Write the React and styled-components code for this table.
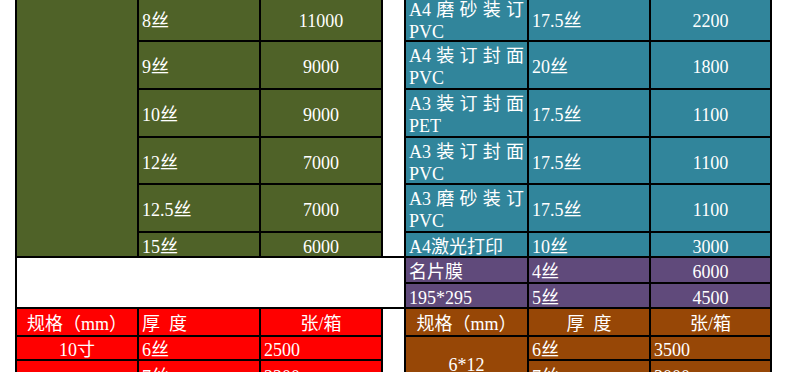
import React from "react";
import styled, { createGlobalStyle } from "styled-components";

const GlobalStyle = createGlobalStyle`
  html, body {
    margin: 0;
    padding: 0;
    background: #fff;
    overflow: hidden;
  }
  body {
    font-family: "Liberation Serif", "Noto Sans CJK SC", serif;
  }
`;

const tones = {
  green: "#4f6228",
  teal: "#31859b",
  purple: "#604a7b",
  red: "#ff0000",
  brown: "#974706",
  blank: "#ffffff",
};

// the sheet is a spreadsheet grid, black gaps act as cell borders
const Sheet = styled.div`
  display: grid;
  grid-template-columns: 120px 120px 120px 21px 121px 120px 119px;
  grid-template-rows: 43px 46px 46px 45px 46px 23px 24px 23px 26px 22px 28px;
  gap: 2px;
  padding: 0 2px 2px;
  margin: -3px 0 0 15px;
  width: max-content;
  background: #000;
`;

const Cell = styled.div`
  grid-row: ${(p) => p.$row} / span ${(p) => p.$rows || 1};
  grid-column: ${(p) => p.$col} / span ${(p) => p.$cols || 1};
  background: ${(p) => tones[p.$tone]};
  color: #fff;
  display: flex;
  align-items: center;
  justify-content: ${(p) => (p.$center ? "center" : "flex-start")};
  padding: 4px 3px 0;
  font-size: 18px;
  line-height: 22px;
  white-space: pre;
  overflow: hidden;
`;

const Label = styled.span`
  display: block;
  width: 100%;
  white-space: normal;
  text-align: justify;
`;

const green = [
  ["8丝", "11000"],
  ["9丝", "9000"],
  ["10丝", "9000"],
  ["12丝", "7000"],
  ["12.5丝", "7000"],
  ["15丝", "6000"],
];

const teal = [
  ["A4磨砂装订PVC", "17.5丝", "2200"],
  ["A4装订封面PVC", "20丝", "1800"],
  ["A3装订封面PET", "17.5丝", "1100"],
  ["A3装订封面PVC", "17.5丝", "1100"],
  ["A3磨砂装订PVC", "17.5丝", "1100"],
  ["A4激光打印", "10丝", "3000"],
];

const purple = [
  ["名片膜", "4丝", "6000"],
  ["195*295", "5丝", "4500"],
];

export default function App() {
  return (
    <>
      <GlobalStyle />
      <Sheet>
        {/* left block */}
        <Cell $tone="green" $row={1} $rows={6} $col={1} />
        {green.map(([thick, qty], i) => (
          <React.Fragment key={"g" + i}>
            <Cell $tone="green" $row={i + 1} $col={2}>{thick}</Cell>
            <Cell $tone="green" $row={i + 1} $col={3} $center>{qty}</Cell>
          </React.Fragment>
        ))}
        <Cell $tone="blank" $row={1} $rows={6} $col={4} />

        {/* right block */}
        {teal.map(([name, thick, qty], i) => (
          <React.Fragment key={"t" + i}>
            <Cell $tone="teal" $row={i + 1} $col={5}>
              <Label>{name}</Label>
            </Cell>
            <Cell $tone="teal" $row={i + 1} $col={6}>{thick}</Cell>
            <Cell $tone="teal" $row={i + 1} $col={7} $center>{qty}</Cell>
          </React.Fragment>
        ))}
        {purple.map(([name, thick, qty], i) => (
          <React.Fragment key={"p" + i}>
            <Cell $tone="purple" $row={i + 7} $col={5}>{name}</Cell>
            <Cell $tone="purple" $row={i + 7} $col={6}>{thick}</Cell>
            <Cell $tone="purple" $row={i + 7} $col={7} $center>{qty}</Cell>
          </React.Fragment>
        ))}

        <Cell $tone="blank" $row={7} $rows={2} $col={1} $cols={4} />

        {/* red table */}
        <Cell $tone="red" $row={9} $col={1} $center>规格（mm）</Cell>
        <Cell $tone="red" $row={9} $col={2}>厚  度</Cell>
        <Cell $tone="red" $row={9} $col={3} $center>张/箱</Cell>
        <Cell $tone="red" $row={10} $col={1} $center>10寸</Cell>
        <Cell $tone="red" $row={10} $col={2}>6丝</Cell>
        <Cell $tone="red" $row={10} $col={3}>2500</Cell>
        <Cell $tone="red" $row={11} $col={1} />
        <Cell $tone="red" $row={11} $col={2}>7丝</Cell>
        <Cell $tone="red" $row={11} $col={3}>2200</Cell>

        <Cell $tone="blank" $row={9} $rows={3} $col={4} />

        {/* brown table */}
        <Cell $tone="brown" $row={9} $col={5} $center>规格（mm）</Cell>
        <Cell $tone="brown" $row={9} $col={6} $center>厚  度</Cell>
        <Cell $tone="brown" $row={9} $col={7} $center>张/箱</Cell>
        <Cell $tone="brown" $row={10} $rows={2} $col={5} $center>6*12</Cell>
        <Cell $tone="brown" $row={10} $col={6}>6丝</Cell>
        <Cell $tone="brown" $row={10} $col={7}>3500</Cell>
        <Cell $tone="brown" $row={11} $col={6}>7丝</Cell>
        <Cell $tone="brown" $row={11} $col={7}>3000</Cell>
      </Sheet>
    </>
  );
}
